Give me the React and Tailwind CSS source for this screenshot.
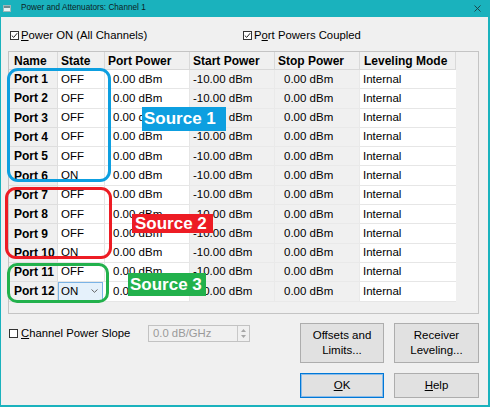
import React from "react";

const rows = [
  ["Port 1", "OFF"],
  ["Port 2", "OFF"],
  ["Port 3", "OFF"],
  ["Port 4", "OFF"],
  ["Port 5", "OFF"],
  ["Port 6", "ON"],
  ["Port 7", "OFF"],
  ["Port 8", "OFF"],
  ["Port 9", "OFF"],
  ["Port 10", "ON"],
  ["Port 11", "OFF"],
  ["Port 12", "DROP"],
];

function Check({ checked }) {
  return (
    <span className="w-[9px] h-[9px] shrink-0 border border-[#333333] bg-white flex items-center justify-center">
      {checked && (
        <svg width="7" height="7" viewBox="0 0 7 7">
          <path d="M0.8 3.6 L2.7 5.4 L6.2 1.2" stroke="#222" strokeWidth="1" fill="none" />
        </svg>
      )}
    </span>
  );
}

const hdr =
  "h-[18px] flex items-center bg-[#f0f0f0] border-r border-b border-[#d9d9d9] font-bold text-[12px] whitespace-nowrap overflow-hidden";

export default function App() {
  return (
    <div className="relative w-[490px] h-[407px] overflow-hidden bg-[#1ab2bd] flex flex-col font-['Liberation_Sans',Arial,sans-serif] text-black">
      {/* title bar */}
      <div className="h-[17px] shrink-0 flex items-center">
        <div className="ml-[3px] w-[8px] h-[7px] bg-[#e8f4f4] border border-[#9fb7b9] flex flex-col">
          <div className="h-[2px] bg-[#6f8c8f]" />
        </div>
        <span className="ml-[10px] text-[8.2px] text-[#0d1d24] leading-none">Power and Attenuators: Channel 1</span>
        <svg className="ml-auto mr-[9px]" width="7" height="7" viewBox="0 0 7 7">
          <path d="M0.5 0.5 L6.5 6.5 M6.5 0.5 L0.5 6.5" stroke="#1d3b3f" strokeWidth="0.9" />
        </svg>
      </div>

      {/* content */}
      <div className="flex-1 ml-[1px] mr-[2px] mb-[2px] bg-[#f0f0f0] flex flex-col">
        {/* top checkboxes */}
        <div className="mt-[11px] h-[14px] pl-[9px] flex items-center text-[11.3px]">
          <div className="w-[233px] flex items-center gap-[2px]">
            <Check checked />
            <span>
              <span className="underline">P</span>ower ON (All Channels)
            </span>
          </div>
          <div className="flex items-center gap-[2px]">
            <Check checked />
            <span>
              P<span className="underline">o</span>rt Powers Coupled
            </span>
          </div>
        </div>

        {/* table */}
        <div className="mt-[9px] ml-[7px] w-[471px] h-[263px] border border-[#c4c4c4] bg-[#f0f0f0]">
          <div className="grid grid-cols-[49px_47px_85px_85px_85px_96px] w-max">
            <div className={hdr + " pl-[5px]"}>Name</div>
            <div className={hdr + " pl-[3px]"}>State</div>
            <div className={hdr + " pl-[3px]"}>Port Power</div>
            <div className={hdr + " pl-[3px]"}>Start Power</div>
            <div className={hdr + " pl-[3px]"}>Stop Power</div>
            <div className={hdr + " pl-[4px]"}>Leveling Mode</div>

            {rows.map(([name, state]) => (
              <React.Fragment key={name}>
                <div className="h-[19.3px] flex items-center pl-[5px] bg-[#f0f0f0] border-r border-b border-[#dedede] font-bold text-[12px] whitespace-nowrap">
                  {name}
                </div>
                {state === "DROP" ? (
                  <div className="h-[19.3px] pr-[2px] bg-white border-b border-[#e6e6e6]">
                    <div className="h-full flex items-center pl-[2px] bg-[#e5f1fb] border border-[#7ab3e6] text-[11.5px]">
                      <span>ON</span>
                      <svg className="ml-auto mr-[4px]" width="7" height="4" viewBox="0 0 7 4">
                        <path d="M0.5 0.5 L3.5 3.3 L6.5 0.5" stroke="#555" strokeWidth="0.9" fill="none" />
                      </svg>
                    </div>
                  </div>
                ) : (
                  <div className="h-[19.3px] flex items-center pl-[3px] bg-white border-r border-b border-[#e6e6e6] text-[11.5px]">
                    {state}
                  </div>
                )}
                <div className="h-[19.3px] flex items-center pl-[8px] bg-white border-r border-b border-[#e6e6e6] text-[11.5px] whitespace-nowrap">
                  0.00 dBm
                </div>
                <div className="h-[19.3px] flex items-center pl-[3px] bg-[#f0f0f0] border-r border-b border-[#e9e9e9] text-[11.5px] whitespace-nowrap">
                  -10.00 dBm
                </div>
                <div className="h-[19.3px] flex items-center pl-[9px] bg-[#f0f0f0] border-r border-b border-[#e9e9e9] text-[11.5px] whitespace-nowrap">
                  0.00 dBm
                </div>
                <div className="h-[19.3px] flex items-center pl-[3px] bg-white border-b border-[#e6e6e6] text-[11.5px]">
                  Internal
                </div>
              </React.Fragment>
            ))}
          </div>
        </div>

        {/* bottom controls */}
        <div className="mt-[9px] pl-[8px] pr-[9px] flex items-start">
          <div className="mt-[2px] h-[17px] flex items-center">
            <Check />
            <span className="ml-[3px] w-[127px] text-[11.3px] whitespace-nowrap">
              <span className="underline">C</span>hannel Power Slope
            </span>
            <div className="w-[102px] h-[17px] border border-[#c2c2c2] bg-[#f0f0f0] flex">
              <span className="flex-1 pl-[4px] text-[11.3px] text-[#9a9a9a] leading-[15px]">0.0 dB/GHz</span>
              <div className="w-[12px] border-l border-[#c8c8c8] flex flex-col items-center justify-center gap-[3px]">
                <svg width="5" height="3" viewBox="0 0 5 3">
                  <path d="M0 3 L2.5 0 L5 3 Z" fill="#a6a6a6" />
                </svg>
                <svg width="5" height="3" viewBox="0 0 5 3">
                  <path d="M0 0 L2.5 3 L5 0 Z" fill="#a6a6a6" />
                </svg>
              </div>
            </div>
          </div>

          <div className="ml-auto grid grid-cols-[84px_85px] grid-rows-[40px_25px] gap-x-[10px] gap-y-[10px] text-[11.5px]">
            <div className="bg-[#e1e1e1] border border-[#adadad] flex items-center justify-center text-center leading-[15px]">
              Offsets and
              <br />
              Limits...
            </div>
            <div className="bg-[#e1e1e1] border border-[#adadad] flex items-center justify-center text-center leading-[15px]">
              Receiver
              <br />
              Leveling...
            </div>
            <div className="bg-[#e1e1e1] border border-[#0078d7] shadow-[inset_0_0_0_1px_#8cbce8] flex items-center justify-center">
              <span>
                <span className="underline">O</span>K
              </span>
            </div>
            <div className="bg-[#e1e1e1] border border-[#adadad] flex items-center justify-center">
              <span>
                <span className="underline">H</span>elp
              </span>
            </div>
          </div>
        </div>
      </div>

      {/* annotation overlays */}
      <div className="absolute left-[7px] top-[68px] w-[104px] h-[114px] border-[3px] border-[#0d9fe0] rounded-[11px]" />
      <div className="absolute left-[5px] top-[187px] w-[107px] h-[72px] border-[3px] border-[#ed1c24] rounded-[11px]" />
      <div className="absolute left-[7px] top-[263px] w-[102px] h-[40px] border-[3px] border-[#22b14c] rounded-[10px]" />

      <div className="absolute left-[142px] top-[107px] w-[84px] h-[24px] bg-[#0d9fe0] text-white font-bold text-[17px] flex items-center pl-[2px] whitespace-nowrap">
        Source 1
      </div>
      <div className="absolute left-[132px] top-[214px] w-[81px] h-[19px] bg-[#ed1c24] text-white font-bold text-[17px] flex items-center pl-[3px] whitespace-nowrap">
        Source 2
      </div>
      <div className="absolute left-[128px] top-[273px] w-[78px] h-[23px] bg-[#22b14c] text-white font-bold text-[17px] flex items-center pl-[2px] whitespace-nowrap">
        Source 3
      </div>
    </div>
  );
}
